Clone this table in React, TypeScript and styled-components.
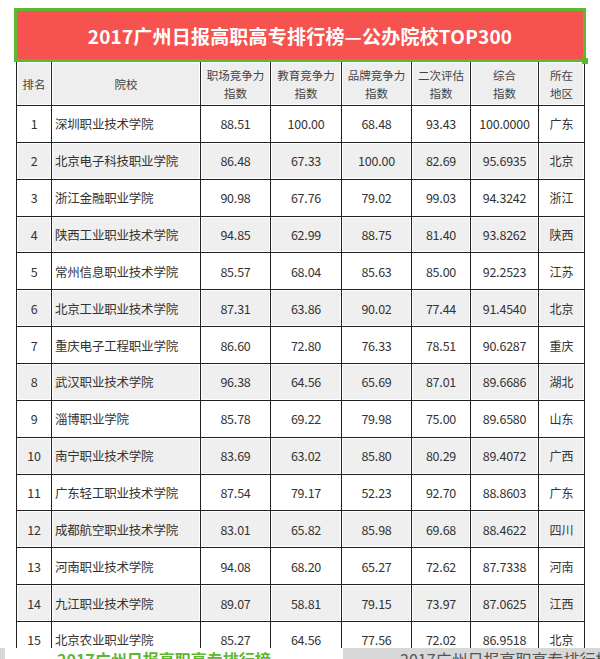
import React from "react";
import styled, { createGlobalStyle } from "styled-components";

const GlobalStyle = createGlobalStyle`
  html, body {
    margin: 0;
    padding: 0;
    background: #ffffff;
  }
  body {
    font-family: "Noto Sans CJK SC", "Noto Sans", sans-serif;
    color: #333333;
  }
`;

type Row = {
  rank: number;
  name: string;
  job: string;
  edu: string;
  brand: string;
  second: string;
  total: string;
  area: string;
};

const rows: Row[] = [
  { rank: 1, name: "深圳职业技术学院", job: "88.51", edu: "100.00", brand: "68.48", second: "93.43", total: "100.0000", area: "广东" },
  { rank: 2, name: "北京电子科技职业学院", job: "86.48", edu: "67.33", brand: "100.00", second: "82.69", total: "95.6935", area: "北京" },
  { rank: 3, name: "浙江金融职业学院", job: "90.98", edu: "67.76", brand: "79.02", second: "99.03", total: "94.3242", area: "浙江" },
  { rank: 4, name: "陕西工业职业技术学院", job: "94.85", edu: "62.99", brand: "88.75", second: "81.40", total: "93.8262", area: "陕西" },
  { rank: 5, name: "常州信息职业技术学院", job: "85.57", edu: "68.04", brand: "85.63", second: "85.00", total: "92.2523", area: "江苏" },
  { rank: 6, name: "北京工业职业技术学院", job: "87.31", edu: "63.86", brand: "90.02", second: "77.44", total: "91.4540", area: "北京" },
  { rank: 7, name: "重庆电子工程职业学院", job: "86.60", edu: "72.80", brand: "76.33", second: "78.51", total: "90.6287", area: "重庆" },
  { rank: 8, name: "武汉职业技术学院", job: "96.38", edu: "64.56", brand: "65.69", second: "87.01", total: "89.6686", area: "湖北" },
  { rank: 9, name: "淄博职业学院", job: "85.78", edu: "69.22", brand: "79.98", second: "75.00", total: "89.6580", area: "山东" },
  { rank: 10, name: "南宁职业技术学院", job: "83.69", edu: "63.02", brand: "85.80", second: "80.29", total: "89.4072", area: "广西" },
  { rank: 11, name: "广东轻工职业技术学院", job: "87.54", edu: "79.17", brand: "52.23", second: "92.70", total: "88.8603", area: "广东" },
  { rank: 12, name: "成都航空职业技术学院", job: "83.01", edu: "65.82", brand: "85.98", second: "69.68", total: "88.4622", area: "四川" },
  { rank: 13, name: "河南职业技术学院", job: "94.08", edu: "68.20", brand: "65.27", second: "72.62", total: "87.7338", area: "河南" },
  { rank: 14, name: "九江职业技术学院", job: "89.07", edu: "58.81", brand: "79.15", second: "73.97", total: "87.0625", area: "江西" },
  { rank: 15, name: "北京农业职业学院", job: "85.27", edu: "64.56", brand: "77.56", second: "72.02", total: "86.9518", area: "北京" },
];

const colWidths = [35, 149, 70, 71, 70, 59, 68, 46];

const Page = styled.div`
  width: 600px;
  height: 659px;
  overflow: hidden;
  display: flex;
  flex-direction: column;
`;

const TitleBox = styled.div`
  position: relative;
  margin: 8px 0 0 14px;
  width: 572px;
  height: 54px;
  flex-shrink: 0;
  box-sizing: border-box;
  border: 3px solid #5cb82e;
  background: #f6524f;
  display: flex;
  align-items: center;
  justify-content: center;
  color: #ffffff;
  font-family: "Noto Sans CJK SC", "Noto Sans", sans-serif;
  font-weight: 700;
  font-size: 19px;
  letter-spacing: 0.2px;
`;

const Handle = styled.span`
  position: absolute;
  right: -5px;
  bottom: -5px;
  width: 6px;
  height: 6px;
  background: #5cb82e;
`;

const TableClip = styled.div`
  height: 586px;
  flex-shrink: 0;
  overflow: hidden;
  padding-left: 16px;
`;

const Table = styled.table`
  border-collapse: collapse;
  table-layout: fixed;
  width: 568px;
  font-family: "Noto Sans CJK SC", "Noto Sans", sans-serif;
  font-size: 12px;
  color: #333333;
`;

const HeadCell = styled.th`
  height: 43px;
  padding: 0;
  border: 1.5px solid #222222;
  border-top: none;
  background: #eeeeee;
  box-shadow: inset 0 0 0 1px #ffffff;
  font-weight: 400;
  font-size: 11.5px;
  line-height: 18px;
  color: #444444;
  text-align: center;
`;

const BodyRow = styled.tr<{ $shaded: boolean }>`
  height: 36.86px;
  background: ${(p) => (p.$shaded ? "#efefef" : "#ffffff")};
`;

const Cell = styled.td<{ $left?: boolean }>`
  padding: ${(p) => (p.$left ? "0 0 0 3px" : "0")};
  border: 1.5px solid #222222;
  box-shadow: inset 0 0 0 1px #ffffff;
  text-align: ${(p) => (p.$left ? "left" : "center")};
  white-space: nowrap;
  font-size: 12.5px;
  letter-spacing: -0.2px;
`;

const AreaCell = styled(Cell)`
  font-size: 12px;
  letter-spacing: 0;
`;

const NextStrip = styled.div`
  height: 11px;
  flex-shrink: 0;
  display: flex;
  overflow: hidden;
`;

const GreySliver = styled.div`
  width: 5px;
  background: #d8d8d8;
`;

const GreenCaption = styled.div`
  margin-left: 52px;
  width: 286px;
  color: #5cb82e;
  font-weight: 700;
  font-size: 16px;
  line-height: 22px;
  white-space: nowrap;
  overflow: hidden;
`;

const GreyCaption = styled.div`
  flex: 1;
  background: #d8d8d8;
  color: #555555;
  font-size: 16px;
  line-height: 22px;
  padding-left: 57px;
  white-space: nowrap;
  overflow: hidden;
`;

const headers = [
  ["排名"],
  ["院校"],
  ["职场竞争力", "指数"],
  ["教育竞争力", "指数"],
  ["品牌竞争力", "指数"],
  ["二次评估", "指数"],
  ["综合", "指数"],
  ["所在", "地区"],
];

export default function App() {
  return (
    <>
      <GlobalStyle />
      <Page>
        <TitleBox>
          2017广州日报高职高专排行榜—公办院校TOP300
          <Handle />
        </TitleBox>
        <TableClip>
          <Table>
            <colgroup>
              {colWidths.map((w, i) => (
                <col key={i} style={{ width: w }} />
              ))}
            </colgroup>
            <thead>
              <tr>
                {headers.map((h, i) => (
                  <HeadCell key={i}>
                    {h.map((line, j) => (
                      <div key={j}>{line}</div>
                    ))}
                  </HeadCell>
                ))}
              </tr>
            </thead>
            <tbody>
              {rows.map((r) => (
                <BodyRow key={r.rank} $shaded={r.rank % 2 === 0}>
                  <Cell>{r.rank}</Cell>
                  <Cell $left>{r.name}</Cell>
                  <Cell>{r.job}</Cell>
                  <Cell>{r.edu}</Cell>
                  <Cell>{r.brand}</Cell>
                  <Cell>{r.second}</Cell>
                  <Cell>{r.total}</Cell>
                  <AreaCell>{r.area}</AreaCell>
                </BodyRow>
              ))}
            </tbody>
          </Table>
        </TableClip>
        <NextStrip>
          <GreySliver />
          <GreenCaption>2017广州日报高职高专排行榜</GreenCaption>
          <GreyCaption>2017广州日报高职高专排行榜—民办</GreyCaption>
        </NextStrip>
      </Page>
    </>
  );
}
